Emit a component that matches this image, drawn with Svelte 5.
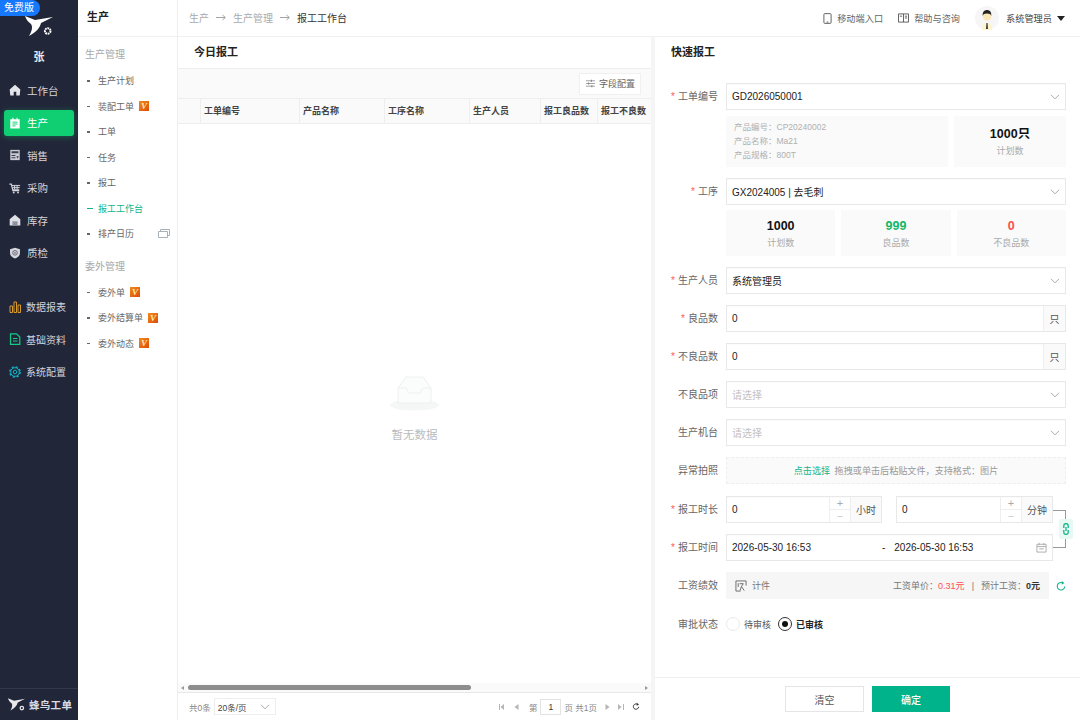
<script>
  const railTop = [
    { name: '工作台', icon: 'home' },
    { name: '生产', icon: 'plan', active: true },
    { name: '销售', icon: 'sale' },
    { name: '采购', icon: 'cart' },
    { name: '库存', icon: 'store' },
    { name: '质检', icon: 'shield' }
  ];
  const groupOne = [
    { name: '生产计划' },
    { name: '装配工单', vip: true },
    { name: '工单' },
    { name: '任务' },
    { name: '报工' },
    { name: '报工工作台', active: true },
    { name: '排产日历', windows: true }
  ];
  const groupTwo = [
    { name: '委外单', vip: true },
    { name: '委外结算单', vip: true },
    { name: '委外动态', vip: true }
  ];
  const columns = [
    { name: '', width: 23 },
    { name: '工单编号', width: 99 },
    { name: '产品名称', width: 85 },
    { name: '工序名称', width: 85 },
    { name: '生产人员', width: 71 },
    { name: '报工良品数', width: 57 },
    { name: '报工不良数', width: 53 }
  ];
</script>

{#snippet chevron()}
  <svg class="chev" viewBox="0 0 10 6" width="10" height="6"><path d="M1 .8l4 4 4-4" fill="none" stroke="#a8a8a8" stroke-width="1" /></svg>
{/snippet}

{#snippet railIcon(type)}
  <svg class="rail-icon" viewBox="0 0 14 14" width="12" height="12">
    {#if type === 'home'}
      <path d="M7 1L.8 6.400 1.500 13.500H5.500V9h3v4.500h4l.7-7.100z" fill="#e4e5ea" />
    {:else if type === 'plan'}
      <path d="M1.500 2.500h2.500V.8h1.200v1.700h3.600V.8H10v1.700h2.500v11h-11z" fill="#fff" />
      <path d="M4 6h6M4 8.200h6M4 10.400h3.500" stroke="#10cf72" stroke-width="1.100" />
    {:else if type === 'sale'}
      <path d="M1.500 1h11v12h-11z" fill="#c9cad3" />
      <path d="M3 2.500h8V5H3zM3 7h4.500v1.200H3zM3 9.500h4.500v1.200H3z" fill="#3a3e50" />
      <path d="M8.500 8.500h3L10 11z" fill="#3a3e50" />
    {:else if type === 'cart'}
      <path d="M.5 2.500h2.200l1.800 7.500h7.500" fill="none" stroke="#d6d7de" stroke-width="1.300" />
      <path d="M3.500 4h9.500M4 6.300h8.500M4.500 8.500h7.500M6.500 4v4.500M9.500 4v4.500" fill="none" stroke="#d6d7de" stroke-width="1.100" />
      <circle cx="5.500" cy="12.300" r="1.100" fill="#d6d7de" /><circle cx="10.500" cy="12.300" r="1.100" fill="#d6d7de" />
    {:else if type === 'store'}
      <path d="M7 .8L.8 6v7.500h12.400V6z" fill="#dfe0e6" />
      <path d="M4 8.500h6v5H4z" fill="#8f92a0" />
    {:else}
      <path d="M7 .8l5.800 1.800V7c0 3.200-2.500 5.200-5.800 6.400C3.700 12.200 1.200 10.200 1.200 7V2.600z" fill="#d6d7de" />
      <circle cx="7" cy="6.800" r="2.700" fill="none" stroke="#5a5d6d" stroke-width="1" />
      <path d="M5.800 5.600l2.400 2.400M8.200 5.600L5.800 8" stroke="#5a5d6d" stroke-width=".7" />
    {/if}
  </svg>
{/snippet}

{#snippet vip()}
  <span class="vip">V</span>
{/snippet}

{#snippet subItem(item)}
  <li class="sub-item" class:active={item.active}>
    <span class="dash"></span>
    <span>{item.name}</span>
    {#if item.vip}{@render vip()}{/if}
    {#if item.windows}
      <svg class="windows" viewBox="0 0 12 9" width="12" height="9">
        <path d="M.5 2.500h9v6h-9z" fill="#fff" stroke="#aab0b8" /><path d="M2.500 2.500V.5h9v6H9.500" fill="none" stroke="#aab0b8" />
      </svg>
    {/if}
  </li>
{/snippet}

{#snippet selectField(value, placeholder)}
  <div class="field select">
    <span class:placeholder>{value}</span>
    {@render chevron()}
  </div>
{/snippet}

{#snippet arrow()}
  <svg class="crumb-arrow" viewBox="0 0 10 7" width="10" height="7"><path d="M0 3.500h9M6.500 1L9.300 3.500 6.500 6" fill="none" stroke="#999" stroke-width=".9" /></svg>
{/snippet}

<div class="app">
  <aside class="rail">
    <div class="free">免费版</div>
    <div class="logo">
      <svg viewBox="0 0 30 26" width="30" height="26">
        <path d="M1 2L11 6 29 3 17 9C16 14 12 18 5 22 8 17 9 13 7 10 4 8 2 5 1 2z" fill="#fff" />
        <circle cx="23.700" cy="17" r="2.800" fill="none" stroke="#fff" stroke-width="2" stroke-dasharray="1.800 .7" />
      </svg>
    </div>
    <div class="tenant">张</div>
    <nav class="rail-nav">
      {#each railTop as item}
        <div class="rail-item" class:active={item.active}>
          {@render railIcon(item.icon)}
          <span>{item.name}</span>
        </div>
      {/each}
    </nav>
    <nav class="rail-nav extra">
      <div class="rail-item small">
        <svg viewBox="0 0 12 12" width="12" height="12"><path d="M1 5h2.500v6.500H1zM5 1h2.500v10.500H5zM9 4h2.500v7.500H9z" fill="none" stroke="#d89a2c" stroke-width="1" /></svg>
        <span>数据报表</span>
      </div>
      <div class="rail-item small">
        <svg viewBox="0 0 12 12" width="12" height="12"><path d="M1.500 .8h6L10.800 4v7.400H1.500z" fill="none" stroke="#14c98a" stroke-width="1.200" /><path d="M4 5.500h4.500M4 8h4.500" stroke="#14c98a" /></svg>
        <span>基础资料</span>
      </div>
      <div class="rail-item small">
        <svg viewBox="0 0 12 12" width="12" height="12">
          <circle cx="6" cy="6" r="4.300" fill="none" stroke="#12b5c9" stroke-width="1" />
          <circle cx="6" cy="6" r="5.200" fill="none" stroke="#12b5c9" stroke-width="1.300" stroke-dasharray="2.100 2" />
          <circle cx="6" cy="6" r="1.800" fill="none" stroke="#12b5c9" />
        </svg>
        <span>系统配置</span>
      </div>
    </nav>
    <div class="brand">
      <svg viewBox="0 0 30 26" width="19" height="16">
        <path d="M1 2L11 6 29 3 17 9C16 14 12 18 5 22 8 17 9 13 7 10 4 8 2 5 1 2z" fill="#e8e8ea" />
        <circle cx="23.700" cy="18" r="2.800" fill="none" stroke="#e8e8ea" stroke-width="2" />
      </svg>
      <span>蜂鸟工单</span>
    </div>
  </aside>

  <aside class="submenu">
    <div class="sub-title">生产</div>
    <div class="sub-group">生产管理</div>
    <ul>
      {#each groupOne as item}{@render subItem(item)}{/each}
    </ul>
    <div class="sub-group second">委外管理</div>
    <ul>
      {#each groupTwo as item}{@render subItem(item)}{/each}
    </ul>
  </aside>

  <main class="main">
    <header class="topbar">
      <div class="crumbs">
        <span>生产</span>{@render arrow()}<span>生产管理</span>{@render arrow()}<b>报工工作台</b>
      </div>
      <div class="top-actions">
        <span class="top-link">
          <svg viewBox="0 0 10 12" width="9" height="11"><rect x="1" y=".6" width="8" height="10.800" rx="1" fill="none" stroke="#555" /><path d="M4 10h2" stroke="#555" /></svg>
          移动端入口
        </span>
        <span class="top-link">
          <svg viewBox="0 0 12 11" width="11" height="10"><path d="M.5 1h11v9H.5zM6 1v9M2 3.500h2.500M7.500 3.500H10M7.500 5.500H10" fill="none" stroke="#555" /></svg>
          帮助与咨询
        </span>
        <span class="user">
          <span class="avatar">
            <svg viewBox="0 0 24 24" width="24" height="24">
              <circle cx="12" cy="12" r="12" fill="#f6f6f6" />
              <path d="M7 24c0-5 2-7 5-7s5 2 5 7z" fill="#fdf3cf" />
              <circle cx="12" cy="10.500" r="4" fill="#fbe6b8" />
              <path d="M7.800 10c-.6-4 1.500-6 4.200-6s4.800 2 4.200 6c-.5-2-1.500-2.600-4.200-2.600S8.300 8 7.800 10z" fill="#222" />
              <path d="M11.500 17h1l.4 6h-1.800z" fill="#222" />
            </svg>
          </span>
          系统管理员
          <span class="caret"></span>
        </span>
      </div>
    </header>

    <div class="split">
      <section class="left">
        <h2 class="panel-title">今日报工</h2>
        <div class="toolbar">
          <span class="config-btn">
            <svg viewBox="0 0 10 10" width="9" height="9"><path d="M0 2h10M0 5h10M0 8h10" stroke="#999" /><path d="M6 .8v2.400M3 3.800v2.400M6.500 6.800v2.400" stroke="#777" /></svg>
            字段配置
          </span>
        </div>
        <div class="thead">
          {#each columns as col}
            <div class="th" style="width: {col.width}px">{col.name}</div>
          {/each}
        </div>
        <div class="tbody">
          <div class="empty">
            <svg viewBox="0 0 50 36" width="50" height="36">
              <ellipse cx="24.500" cy="29" rx="24.500" ry="5.500" fill="#f5f6f6" />
              <path d="M16 1h17l8 11v15H8V12z" fill="#fbfcfc" stroke="#eef0f0" />
              <path d="M8 12h8l3 5h11l3-5h8" fill="none" stroke="#eef0f0" />
            </svg>
            <span>暂无数据</span>
          </div>
        </div>
        <div class="scrollbar">
          <span class="arrow l"></span>
          <div class="track"><div class="thumb"></div></div>
          <span class="arrow r"></span>
        </div>
        <footer class="pager">
          <div class="pager-left">
            <span>共0条</span>
            <span class="size">20条/页 {@render chevron()}</span>
          </div>
          <div class="pager-right">
            <svg class="nav-i" viewBox="0 0 5 6" width="5" height="6"><path d="M0 0h1v6H0zM5 0v6L1.500 3z" /></svg>
            <svg class="nav-i" viewBox="0 0 5 6" width="5" height="6"><path d="M4.500 0v6L.5 3z" /></svg>
            <span class="page-label">第</span>
            <span class="page-no">1</span>
            <span>页 共1页</span>
            <svg class="nav-i after" viewBox="0 0 5 6" width="5" height="6"><path d="M.5 0v6l4-3z" /></svg>
            <svg class="nav-i after last" viewBox="0 0 6 6" width="6" height="6"><path d="M0 0v6l3.500-3zM5 0h1v6H5z" /></svg>
            <svg class="nav-i after dark" viewBox="0 0 12 12" width="8" height="9"><path d="M10 6.500A4 4 0 1 1 8.500 3" fill="none" stroke="#333" stroke-width="1.500" /><path d="M7 .5l3.500 2.500L7 5z" fill="#333" /></svg>
          </div>
        </footer>
      </section>

      <section class="right">
        <h2 class="panel-title right-title">快速报工</h2>
        <div class="form">
          <div class="row">
            <div class="label req">工单编号</div>
            {@render selectField('GD2026050001', false)}
          </div>
          <div class="row tight">
            <div></div>
            <div class="info-line">
              <div class="info">
                <div>产品编号：CP20240002</div>
                <div>产品名称：Ma21</div>
                <div>产品规格：800T</div>
              </div>
              <div class="stat plan">
                <strong>1000只</strong>
                <small>计划数</small>
              </div>
            </div>
          </div>
          <div class="row">
            <div class="label req">工序</div>
            {@render selectField('GX2024005 | 去毛刺', false)}
          </div>
          <div class="row stat-row">
            <div></div>
            <div class="stats">
              <div class="stat"><strong>1000</strong><small>计划数</small></div>
              <div class="stat"><strong class="good">999</strong><small>良品数</small></div>
              <div class="stat"><strong class="bad">0</strong><small>不良品数</small></div>
            </div>
          </div>
          <div class="row">
            <div class="label req">生产人员</div>
            {@render selectField('系统管理员', false)}
          </div>
          <div class="row">
            <div class="label req">良品数</div>
            <div class="field unit-field"><span class="value">0</span><span class="addon">只</span></div>
          </div>
          <div class="row">
            <div class="label req">不良品数</div>
            <div class="field unit-field"><span class="value">0</span><span class="addon">只</span></div>
          </div>
          <div class="row">
            <div class="label">不良品项</div>
            {@render selectField('请选择', true)}
          </div>
          <div class="row">
            <div class="label">生产机台</div>
            {@render selectField('请选择', true)}
          </div>
          <div class="row">
            <div class="label">异常拍照</div>
            <div class="upload"><em>点击选择</em> 拖拽或单击后粘贴文件，支持格式：图片</div>
          </div>
          <div class="row duration-row">
            <div class="label req">报工时长</div>
            <div class="durations">
              <div class="field unit-field">
                <span class="value">0</span>
                <span class="stepper"><span>+</span><span>−</span></span>
                <span class="addon wide">小时</span>
              </div>
              <div class="field unit-field">
                <span class="value">0</span>
                <span class="stepper"><span>+</span><span>−</span></span>
                <span class="addon wide">分钟</span>
              </div>
            </div>
          </div>
          <div class="row">
            <div class="label req">报工时间</div>
            <div class="field date-range">
              <span>2026-05-30 16:53</span>
              <span class="to">-</span>
              <span>2026-05-30 16:53</span>
              <svg viewBox="0 0 12 12" width="11" height="11"><path d="M1 2.500h10v8.500H1zM1 5h10M3.500 1v2.500M8.500 1v2.500M3.500 7.500h5" fill="none" stroke="#aaa" /></svg>
            </div>
          </div>
          <div class="row">
            <div class="label">工资绩效</div>
            <div class="salary-line">
              <div class="salary">
                <span class="piece">
                  <svg viewBox="0 0 13 13" width="12" height="12"><path d="M6 12H1V1h11v5M3.500 3.500v4M5 4h4l-2 3 3 4.500M7 7l-1.500 4.500" fill="none" stroke="#666" /></svg>
                  计件
                </span>
                <span class="wage">工资单价：<b class="bad">0.31元</b> <i>|</i> 预计工资：<b>0元</b></span>
              </div>
              <svg class="refresh" viewBox="0 0 12 12" width="10" height="10"><path d="M10.500 6.500A4.500 4.500 0 1 1 8 2.300" fill="none" stroke="#10b58b" stroke-width="1.300" /><path d="M7 0l3 2.500L7 4.500z" fill="#10b58b" /></svg>
            </div>
          </div>
          <div class="row radios">
            <div class="label">审批状态</div>
            <div class="radio-group">
              <span class="radio-item"><span class="radio"></span>待审核</span>
              <span class="radio-item on"><span class="radio"></span>已审核</span>
            </div>
          </div>

          <div class="link-line"></div>
          <div class="link-badge">
            <svg viewBox="0 0 8 12" width="8" height="12"><path d="M1.800 5V2.800a2.200 2.200 0 0 1 4.400 0V5M1.800 7v2.200a2.200 2.200 0 0 0 4.400 0V7M4 4v4" fill="none" stroke="#10b58b" stroke-width="1.300" /></svg>
          </div>
        </div>
        <footer class="actions">
          <button type="button" class="btn">清空</button>
          <button type="button" class="btn primary">确定</button>
        </footer>
      </section>
    </div>
  </main>
</div>

<style>
  :global(body) {
    margin: 0;
    background: #fff;
  }

  .app {
    display: grid;
    grid-template-columns: 78px 100px 1fr;
    width: 1080px;
    height: 720px;
    overflow: hidden;
    font-family: "Liberation Sans", "Noto Sans CJK SC", sans-serif;
    font-size: 10px;
    color: #333;
  }

  /* dark rail */
  .rail {
    position: relative;
    display: flex;
    flex-direction: column;
    background: #222639;
    color: #d3d4dc;
  }

  .free {
    position: absolute;
    left: 0;
    top: 0;
    width: 40px;
    height: 16px;
    line-height: 16px;
    padding-left: 4px;
    box-sizing: border-box;
    background: #1677ff;
    color: #fff;
    font-size: 10px;
    border-radius: 0 8px 8px 0;
  }

  .logo {
    display: flex;
    justify-content: center;
    padding-top: 14px;
    height: 23px;
  }

  .tenant {
    margin-top: 12px;
    text-align: center;
    color: #e8e8ec;
    font-size: 11px;
    font-weight: 700;
    height: 16px;
    line-height: 16px;
  }

  .rail-nav {
    display: flex;
    flex-direction: column;
    gap: 7px;
    margin: 12.500px 4px 0;
  }

  .rail-nav.extra {
    margin-top: 28.500px;
    gap: 7px;
  }

  .rail-item {
    display: flex;
    align-items: center;
    gap: 6px;
    height: 25.500px;
    padding-left: 5px;
    font-size: 10.500px;
    border-radius: 3px;
  }

  .rail-item.small {
    gap: 5px;
    font-size: 10px;
  }

  .rail-item.active {
    background: #10cf72;
    color: #fff;
    box-shadow: 0 1px 6px rgba(16, 207, 114, 0.35);
  }

  .brand {
    position: absolute;
    left: 0;
    right: 0;
    bottom: 0;
    height: 32px;
    display: flex;
    align-items: center;
    gap: 3px;
    padding-left: 7px;
    box-sizing: border-box;
    border-top: 1px solid #34384b;
    color: #dcdde2;
    font-size: 10.500px;
    letter-spacing: 0.300px;
    font-weight: 700;
  }

  /* second menu */
  .submenu {
    border-right: 1px solid #eee;
    background: #fff;
  }

  .sub-title {
    height: 36px;
    line-height: 35px;
    padding-left: 9px;
    font-size: 11px;
    font-weight: 700;
    color: #222;
    border-bottom: 1px solid #f1f1f1;
  }

  .sub-group {
    height: 16px;
    line-height: 16px;
    margin: 10px 0 5px 7px;
    color: #a8a8a8;
    font-size: 10px;
  }

  .sub-group.second {
    margin-top: 12px;
  }

  ul {
    list-style: none;
    margin: 0;
    padding: 0;
  }

  .sub-item {
    display: flex;
    align-items: center;
    height: 25.500px;
    padding-left: 9px;
    color: #666;
    font-size: 9px;
    position: relative;
  }

  .dash {
    width: 3px;
    height: 1.500px;
    background: #666;
    margin-right: 8px;
  }

  .sub-item.active {
    color: #10b58b;
  }

  .sub-item.active .dash {
    width: 6px;
    background: #10b58b;
    margin-right: 5px;
  }

  .vip {
    display: inline-block;
    width: 10px;
    height: 10px;
    line-height: 10px;
    margin-left: 5px;
    text-align: center;
    background: linear-gradient(135deg, #f28a1c, #dc4c0c);
    color: #ffe9b0;
    font-family: "Liberation Serif", serif;
    font-style: italic;
    font-weight: 700;
    font-size: 9px;
  }

  .windows {
    position: absolute;
    right: 7px;
    top: 8px;
  }

  /* main */
  .main {
    display: flex;
    flex-direction: column;
    min-width: 0;
  }

  .topbar {
    height: 36px;
    box-sizing: content-box;
    display: flex;
    align-items: center;
    justify-content: space-between;
    padding: 0 14px 0 11px;
    border-bottom: 1px solid #f0f0f0;
    flex: none;
  }

  .crumbs {
    display: flex;
    align-items: center;
    color: #aaa;
    font-size: 10px;
    margin-top: -1px;
  }

  .crumb-arrow {
    margin: 0 7px;
  }

  .crumbs b {
    font-weight: 400;
    color: #333;
  }

  .top-actions {
    display: flex;
    align-items: center;
    gap: 15px;
    color: #666;
    font-size: 9.200px;
    margin-right: 1px;
  }

  .top-link {
    display: flex;
    align-items: center;
    gap: 5px;
  }

  .user {
    display: flex;
    align-items: center;
    gap: 7px;
    color: #444;
  }

  .avatar {
    display: block;
    width: 24px;
    height: 24px;
  }

  .caret {
    width: 0;
    height: 0;
    margin-left: -2px;
    border-style: solid;
    border-width: 5px 4.500px 0;
    border-color: #222 transparent transparent;
  }

  .split {
    flex: 1;
    display: flex;
    min-height: 0;
  }

  .left {
    width: 473px;
    display: flex;
    flex-direction: column;
    border-right: 4px solid #f5f5f5;
    flex: none;
  }

  .panel-title {
    margin: 0;
    height: 31px;
    line-height: 30px;
    padding-left: 16px;
    font-size: 11px;
    font-weight: 700;
    color: #222;
    flex: none;
  }

  .toolbar {
    height: 31px;
    background: #fafafa;
    border-top: 1px solid #eee;
    border-bottom: 1px solid #eee;
    box-sizing: border-box;
    display: flex;
    align-items: center;
    justify-content: flex-end;
    padding-right: 10px;
    flex: none;
  }

  .config-btn {
    display: flex;
    align-items: center;
    gap: 4px;
    height: 20px;
    padding: 0 5px 0 6px;
    background: #fff;
    border: 1px solid #f0f0f0;
    color: #666;
    font-size: 9px;
  }

  .thead {
    display: flex;
    height: 25px;
    background: #fafafa;
    border-bottom: 1px solid #eee;
    box-sizing: border-box;
    flex: none;
  }

  .th {
    box-sizing: border-box;
    border-right: 1px solid #eee;
    padding-left: 3px;
    line-height: 24px;
    font-size: 9px;
    font-weight: 700;
    color: #444;
    white-space: nowrap;
    overflow: hidden;
    flex: none;
  }

  .th:last-child {
    border-right: 0;
  }

  .tbody {
    flex: 1;
    display: flex;
    justify-content: center;
    padding-top: 252px;
    box-sizing: border-box;
    min-height: 0;
  }

  .empty {
    display: flex;
    flex-direction: column;
    align-items: center;
    gap: 14px;
    color: #bbb;
    font-size: 11.500px;
  }

  .scrollbar {
    height: 9px;
    display: flex;
    align-items: center;
    gap: 3px;
    padding: 0 3px;
    background: #fafafa;
    flex: none;
  }

  .arrow {
    width: 0;
    height: 0;
    border-style: solid;
    border-width: 2.500px 3px;
    border-color: transparent;
  }

  .arrow.l {
    border-right-color: #999;
    margin-left: -3px;
  }

  .arrow.r {
    border-left-color: #999;
    margin-right: -3px;
  }

  .track {
    flex: 1;
    height: 5px;
  }

  .thumb {
    width: 283px;
    height: 5px;
    margin-left: 1px;
    background: #8d8d8d;
    border-radius: 3px;
  }

  .pager {
    height: 28px;
    border-top: 1px solid #e8e8e8;
    box-sizing: border-box;
    display: flex;
    align-items: center;
    justify-content: space-between;
    padding: 0 11px;
    color: #888;
    font-size: 8.500px;
    flex: none;
  }

  .pager-left {
    display: flex;
    align-items: center;
    gap: 3px;
  }

  .size {
    display: flex;
    align-items: center;
    justify-content: space-between;
    width: 62px;
    height: 17px;
    padding: 0 5px 0 3px;
    box-sizing: border-box;
    border: 1px solid #eee;
    color: #444;
  }

  .pager-right {
    display: flex;
    align-items: center;
    gap: 3px;
  }

  .nav-i {
    fill: #b5b5b5;
    margin-right: 7px;
  }

  .nav-i.after {
    margin-right: 0;
    margin-left: 5px;
  }

  .nav-i.last {
    margin-left: 5px;
  }

  .nav-i.dark {
    margin-left: 5px;
  }

  .page-no {
    width: 19px;
    height: 14px;
    line-height: 14px;
    border: 1px solid #e3e3e3;
    text-align: center;
    color: #333;
  }

  /* quick report */
  .right {
    flex: 1;
    display: flex;
    flex-direction: column;
    min-width: 0;
    position: relative;
  }

  .right-title {
    height: 46px;
    padding-left: 16px;
    line-height: 30px;
  }

  .form {
    flex: 1;
    padding-right: 14px;
    position: relative;
    display: flex;
    flex-direction: column;
    gap: 11px;
  }

  .row {
    display: grid;
    grid-template-columns: 63px 1fr;
    column-gap: 8px;
    align-items: center;
  }

  .row.tight {
    margin-top: -5px;
  }

  .row.stat-row {
    margin-top: -6px;
  }

  .row.duration-row {
    margin-top: 1px;
  }

  .label {
    text-align: right;
    color: #666;
    font-size: 10px;
    white-space: nowrap;
    padding-bottom: 2px;
  }

  .label.req::before {
    content: "*";
    color: #ff5a5a;
    margin-right: 3px;
  }

  .field {
    height: 27px;
    box-sizing: border-box;
    border: 1px solid #e8e8e8;
    box-shadow: inset 0 1px 1px rgba(0, 0, 0, 0.02);
    background: #fff;
    display: flex;
    align-items: center;
    color: #222;
    font-size: 10px;
  }

  .select {
    justify-content: space-between;
    padding: 0 5px;
  }

  .placeholder {
    color: #c4bfc4;
  }

  .info-line {
    display: flex;
    gap: 6px;
  }

  .info {
    flex: 1;
    height: 51px;
    box-sizing: border-box;
    padding: 4px 8px;
    background: #fafafa;
    color: #b0b0b0;
    font-size: 8.500px;
    line-height: 14px;
  }

  .stat {
    background: #fafafa;
    height: 46px;
    flex: 1;
    box-sizing: border-box;
    padding-top: 2px;
    display: flex;
    flex-direction: column;
    align-items: center;
    justify-content: center;
    gap: 3px;
  }

  .stat.plan {
    flex: none;
    width: 112px;
    height: 51px;
    padding-top: 0;
  }

  .stat strong {
    font-size: 12.500px;
    color: #111;
    line-height: 15px;
  }

  .stat small {
    font-size: 9px;
    color: #aaa;
    line-height: 12px;
  }

  .stats {
    display: flex;
    gap: 6px;
  }

  .good {
    color: #12b76a !important;
  }

  .bad {
    color: #ff4d4f !important;
  }

  .unit-field .value {
    flex: 1;
    padding-left: 5px;
  }

  .addon {
    align-self: stretch;
    width: 21px;
    display: flex;
    align-items: center;
    justify-content: center;
    background: #fafafa;
    border-left: 1px solid #eee;
    color: #555;
  }

  .addon.wide {
    width: 30px;
  }

  .stepper {
    align-self: stretch;
    width: 20px;
    display: flex;
    flex-direction: column;
    border-left: 1px solid #eee;
    color: #aaa;
    font-size: 11px;
  }

  .stepper span {
    flex: 1;
    display: flex;
    align-items: center;
    justify-content: center;
    line-height: 1;
  }

  .stepper span + span {
    border-top: 1px solid #eee;
    color: #ccc;
  }

  .upload {
    height: 27px;
    line-height: 27px;
    text-align: center;
    background: #fafafa;
    border: 1px dashed #eee;
    box-sizing: border-box;
    color: #999;
    font-size: 9.100px;
  }

  .upload em {
    font-style: normal;
    color: #10b58b;
    margin-right: 2px;
  }

  .durations {
    display: grid;
    grid-template-columns: 156px 157px;
    gap: 14px;
  }

  .date-range {
    width: 327px;
    padding: 0 5px;
    position: relative;
    white-space: nowrap;
  }

  .date-range .to {
    margin: 0 9px 0 71px;
  }

  .date-range svg {
    margin-left: auto;
  }

  .salary-line {
    display: flex;
    align-items: center;
  }

  .salary {
    width: 323px;
    height: 27px;
    background: #f6f6f6;
    display: flex;
    align-items: center;
    justify-content: space-between;
    padding: 0 9px;
    box-sizing: border-box;
    color: #777;
    font-size: 9px;
  }

  .piece {
    display: flex;
    align-items: center;
    gap: 5px;
  }

  .wage b {
    font-weight: 400;
  }

  .wage b:last-child {
    color: #333;
    font-weight: 700;
  }

  .wage i {
    font-style: normal;
    margin: 0 4.500px;
  }

  .refresh {
    margin-left: 7px;
  }

  .radios {
    margin-top: 5.500px;
  }

  .radio-group {
    display: flex;
    align-items: center;
    gap: 7px;
  }

  .radio-item {
    display: flex;
    align-items: center;
    gap: 4px;
    color: #555;
    font-size: 9px;
  }

  .radio {
    width: 14px;
    height: 14px;
    box-sizing: border-box;
    border: 1px solid #eaeaea;
    border-radius: 50%;
    background: #fff;
    position: relative;
  }

  .on {
    color: #222;
    font-weight: 700;
  }

  .on .radio {
    border-color: #333;
  }

  .on .radio::after {
    content: "";
    position: absolute;
    left: 3px;
    top: 3px;
    width: 6px;
    height: 6px;
    border-radius: 50%;
    background: #111;
  }

  /* link between duration and time */
  .link-line {
    position: absolute;
    left: 398px;
    top: 427px;
    width: 13px;
    height: 38px;
    box-sizing: border-box;
    border: 1px solid #999;
    border-left: 0;
  }

  .link-badge {
    position: absolute;
    left: 404px;
    top: 436px;
    width: 14px;
    height: 20px;
    background: #e8f8f2;
    display: flex;
    align-items: center;
    justify-content: center;
    border-radius: 2px;
  }

  .actions {
    height: 43px;
    border-top: 1px solid #eee;
    box-sizing: border-box;
    display: flex;
    gap: 8px;
    padding: 8px 0 0 130px;
    flex: none;
  }

  .btn {
    width: 79px;
    height: 26px;
    padding: 0;
    border: 1px solid #e5e5e5;
    background: #fff;
    color: #555;
    font: inherit;
    font-size: 10px;
  }

  .btn.primary {
    width: 78px;
    background: #00b38a;
    border-color: #00b38a;
    color: #fff;
    font-weight: 500;
  }
</style>
